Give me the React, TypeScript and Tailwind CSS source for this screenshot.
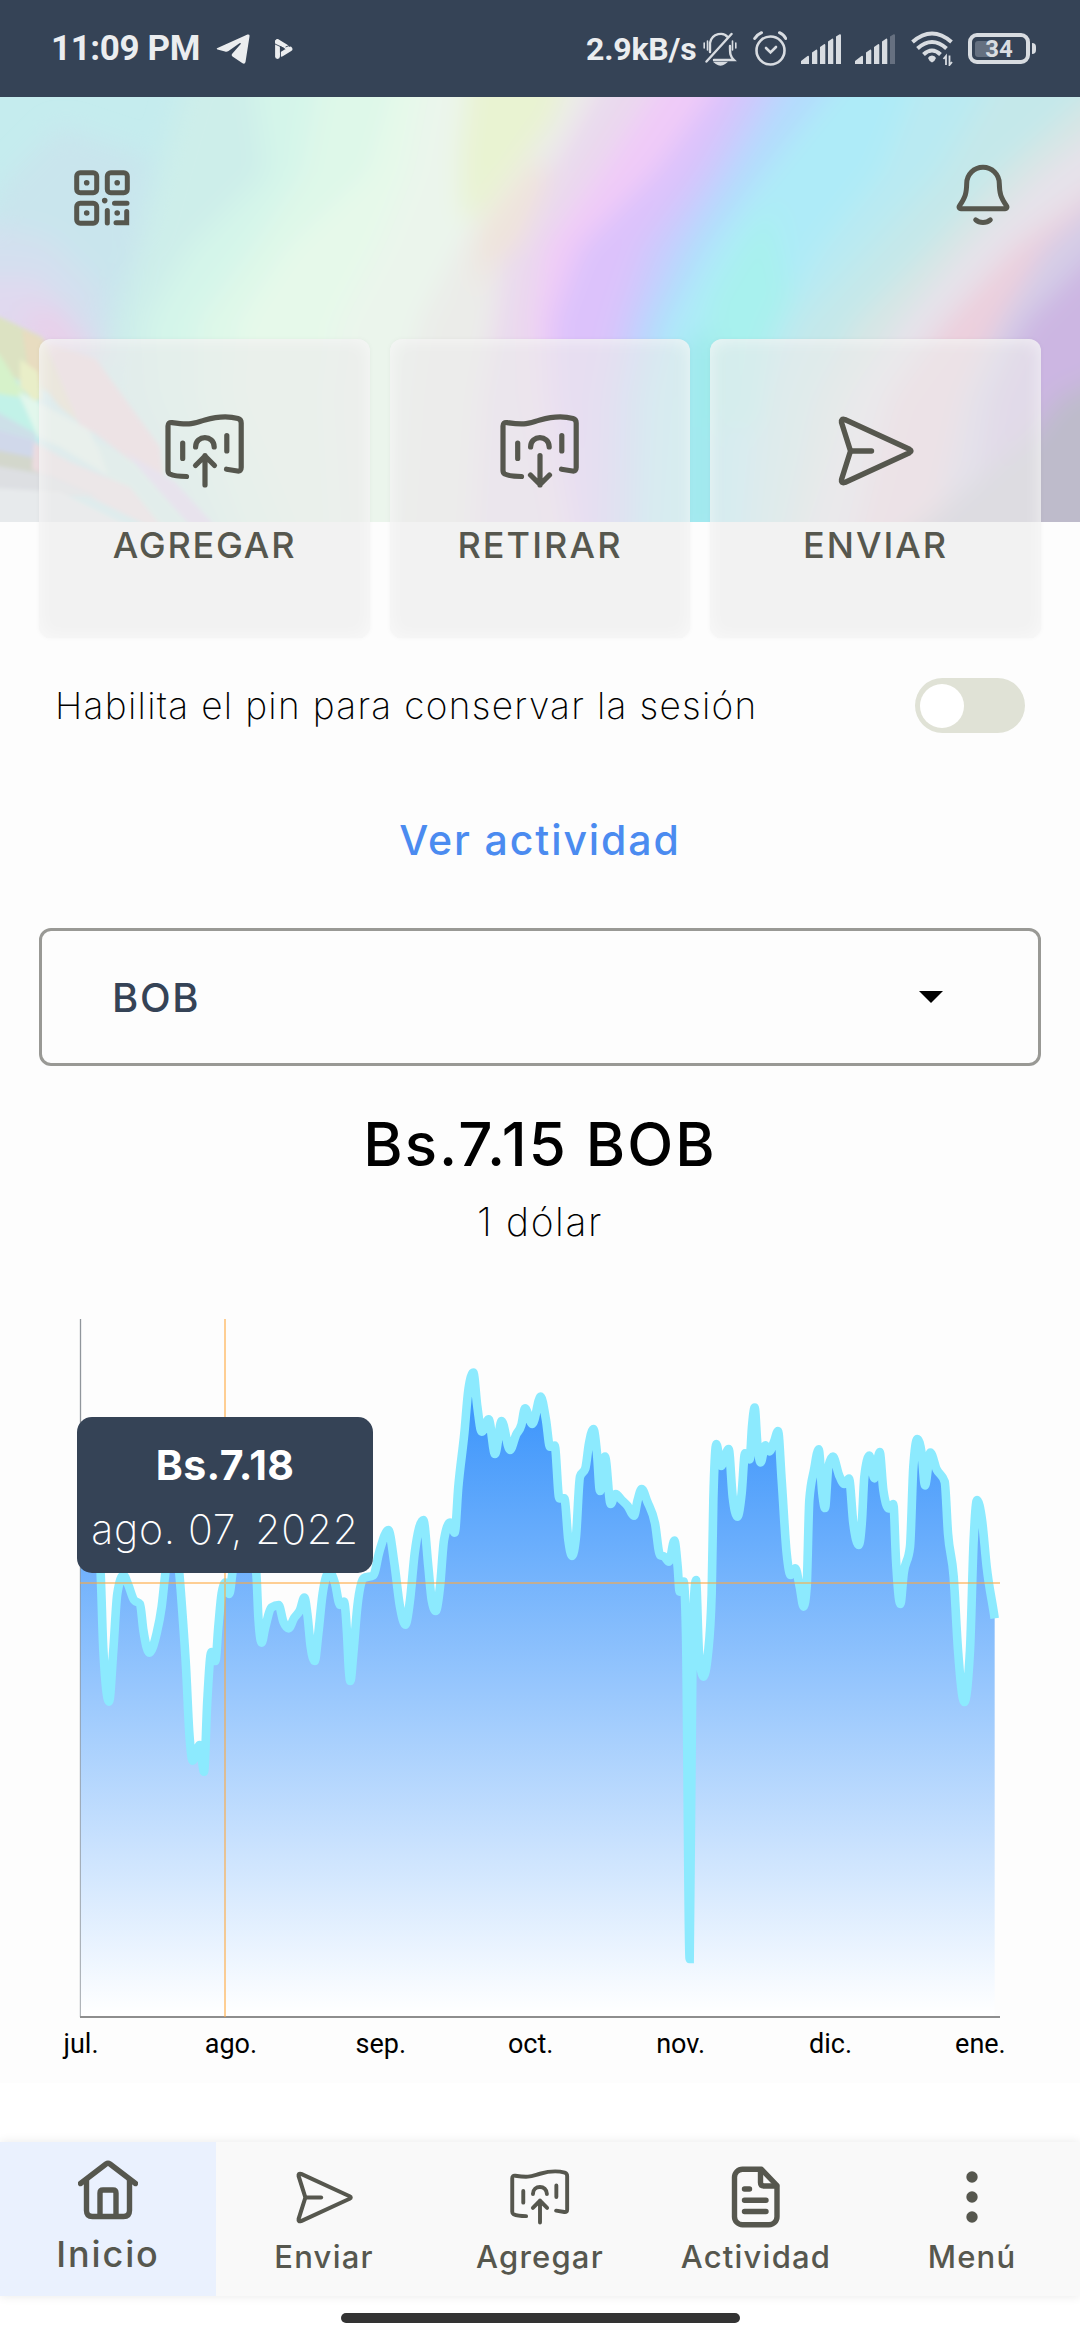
import type { ReactNode } from 'react';

type IconProps = {
  className?: string;
};

// Holographic header: every band covers from its left edge to the right side
const BAND_ROWS = [-30, 75, 150, 225, 300, 460];

const BANDS = [
  { color: '#cdeeea', edge: [190, 160, 140, 115, 110, 180] },
  { color: '#d4f5ea', edge: [250, 265, 190, 145, 150, 230] },
  { color: '#def8e9', edge: [320, 300, 250, 195, 195, 250] },
  { color: '#e6f9ea', edge: [400, 370, 290, 240, 235, 300] },
  { color: '#ebf5ec', edge: [430, 410, 380, 340, 330, 340] },
  { color: '#ebece9', edge: [570, 520, 460, 420, 410, 400] },
  { color: '#ead9ee', edge: [610, 550, 505, 495, 480, 470] },
  { color: '#f0cbf8', edge: [670, 600, 545, 535, 540, 570] },
  { color: '#dcc2fb', edge: [730, 655, 580, 552, 555, 580] },
  { color: '#c9ccfd', edge: [760, 700, 645, 620, 605, 600] },
  { color: '#b4dcfd', edge: [795, 730, 680, 645, 630, 630] },
  { color: '#aeebf8', edge: [850, 765, 710, 670, 650, 640] },
  { color: '#b9eaf2', edge: [920, 880, 820, 775, 750, 740] },
  { color: '#c4e8ea', edge: [1000, 940, 870, 800, 770, 750] },
  { color: '#d6e6e5', edge: [1120, 1000, 930, 855, 815, 780] },
  { color: '#e6e2ea', edge: [1180, 1040, 965, 900, 850, 800] },
  { color: '#eccfdd', edge: [1280, 1120, 1015, 945, 890, 850] },
  { color: '#d4cde7', edge: [1290, 1130, 1045, 1000, 965, 930] },
  { color: '#ccb6e2', edge: [1290, 1200, 1100, 1025, 990, 970] },
];

const PATCHES = [
  { color: '#c9e5ed', points: '0,90 60,30 150,60 140,150 100,260 -40,200' },
  { color: '#d3e0ef', points: '-40,120 50,140 100,190 110,260 -40,230' },
  { color: '#e0d9ef', points: '-40,180 40,180 80,230 110,260 -40,250' },
  { color: '#e8d0ea', points: '25,215 60,210 100,270 50,275 25,240' },
  { color: '#e9f3d2', points: '470,-30 570,-30 555,20 525,60 480,120 462,120 460,60' },
  { color: '#efe4dc', points: '500,100 535,60 550,80 520,150 490,170 478,200 475,140' },
  { color: '#a8f1ee', points: '740,150 770,110 790,200 770,240 760,330 690,330 710,200' },
  { color: '#9ce8ea', points: '688,240 715,240 715,440 688,440' },
  { color: '#bebbcb', points: '1130,270 1060,300 1030,340 880,460 1130,460' },
];

// Small facets of the lower left corner
const SHARDS = [
  { color: '#dce2c2', points: '-20,215 0,220 42,240 70,300 30,290 -20,260' },
  { color: '#d6f2ca', points: '-20,245 0,258 20,290 40,320 20,310 -20,290' },
  { color: '#e8dcc0', points: '22,232 42,242 60,262 85,330 60,310 28,270' },
  { color: '#e9eec8', points: '20,262 38,275 42,302 34,304 20,290' },
  { color: '#eed2d8', points: '45,245 96,262 160,350 165,390 93,335 80,330' },
  { color: '#c2f2e8', points: '-20,290 0,297 20,300 38,335 34,342 -20,310' },
  { color: '#e2f7ec', points: '18,295 36,304 88,332 98,350 110,380 60,350 38,340' },
  { color: '#cde0e8', points: '-20,305 35,336 35,352 -20,330' },
  { color: '#d0d8ea', points: '-20,328 36,344 32,364 -20,352' },
  { color: '#cff0e8', points: '97,345 160,380 210,440 150,440 110,385' },
  { color: '#e0d2f0', points: '125,355 175,385 225,440 200,440 160,395' },
  { color: '#d3d7cc', points: '-20,350 55,365 60,374 32,378 -20,368' },
  { color: '#ecdce0', points: '34,345 70,365 130,390 170,440 90,400 32,372' },
  { color: '#dddfe2', points: '-20,366 50,378 100,400 -20,395' },
  { color: '#e7eaec', points: '-20,390 60,395 150,440 -20,440' },
];

const MONTHS = ['jul.', 'ago.', 'sep.', 'oct.', 'nov.', 'dic.', 'ene.'];

// Exchange rate curve, in thirds of a pixel from the chart's origin
const RATES: [number, number][] = [
  [62, 640], [90, 500], [110, 680], [122, 820], [130, 1050], [147, 1205], [160, 1050], [172, 880],
  [190, 825], [205, 855], [222, 900], [240, 912], [250, 990], [268, 1058], [290, 1000], [305, 920],
  [316, 820], [336, 700], [358, 820], [368, 950], [378, 1100], [388, 1300], [398, 1382], [419, 1335],
  [432, 1415], [442, 1200], [454, 1056], [466, 1083], [475, 980], [485, 880], [496, 848], [508, 882],
  [517, 820], [550, 600], [589, 820], [595, 950], [605, 1028], [615, 985], [635, 922], [656, 915],
  [670, 965], [686, 985], [702, 955], [720, 930], [733, 893], [743, 950], [752, 1040], [764, 1083],
  [775, 1000], [788, 880], [808, 815], [825, 850], [840, 915], [852, 905], [861, 1000], [866, 1100],
  [871, 1143], [880, 1060], [892, 920], [910, 835], [940, 826], [958, 755], [985, 690], [1003, 790],
  [1020, 920], [1036, 974], [1050, 900], [1064, 760], [1090, 660], [1105, 800], [1115, 900], [1127, 933],
  [1140, 860], [1152, 720], [1170, 668], [1184, 698], [1195, 560], [1213, 400], [1225, 270], [1240, 218],
  [1252, 320], [1265, 395], [1286, 358], [1305, 462], [1325, 363], [1350, 450], [1368, 405], [1384, 375],
  [1395, 325], [1417, 372], [1442, 290], [1458, 360], [1470, 440], [1484, 437], [1498, 595], [1513, 595],
  [1525, 720], [1536, 768], [1548, 710], [1560, 530], [1576, 505], [1587, 430], [1600, 387], [1611, 460],
  [1620, 573], [1635, 470], [1652, 612], [1667, 582], [1685, 600], [1703, 618], [1722, 647], [1733, 600],
  [1745, 567], [1762, 605], [1785, 670], [1800, 765], [1813, 770], [1827, 785], [1843, 722], [1853, 800],
  [1859, 875], [1871, 845], [1878, 1000], [1889, 1977], [1898, 1000], [1908, 840], [1917, 1060], [1930, 1130],
  [1944, 1060], [1955, 880], [1960, 600], [1969, 432], [1983, 498], [2006, 447], [2018, 590], [2032, 650],
  [2045, 580], [2055, 460], [2069, 478], [2076, 380], [2084, 323], [2092, 430], [2102, 487], [2116, 436],
  [2128, 454], [2142, 425], [2154, 393], [2165, 540], [2180, 760], [2192, 825], [2206, 805], [2219, 860],
  [2231, 920], [2240, 860], [2248, 600], [2262, 510], [2276, 448], [2287, 580], [2295, 624], [2305, 500],
  [2319, 470], [2337, 525], [2353, 552], [2367, 536], [2380, 670], [2396, 735], [2406, 660], [2413, 530],
  [2428, 467], [2443, 535], [2459, 456], [2470, 570], [2486, 625], [2500, 612], [2508, 780], [2521, 912],
  [2531, 820], [2550, 740], [2560, 500], [2572, 417], [2585, 460], [2595, 556], [2611, 458], [2630, 508],
  [2654, 545], [2664, 700], [2681, 830], [2694, 1050], [2713, 1206], [2730, 1050], [2741, 720], [2751, 600],
  [2766, 660], [2780, 800], [2804, 955],
];

// Monotone cubic interpolation, so that each peak stays a peak
const monotonePath = (points: [number, number][]) => {
  const slopes = points.map((point, i) => {
    if (i === 0 || i === points.length - 1) return 0;
    const [x0, y0] = points[i - 1];
    const [x1, y1] = point;
    const [x2, y2] = points[i + 1];
    const s0 = (y1 - y0) / (x1 - x0);
    const s1 = (y2 - y1) / (x2 - x1);
    if (s0 * s1 <= 0) return 0;
    const p = (s0 * (x2 - x1) + s1 * (x1 - x0)) / (x2 - x0);
    return Math.sign(s0) * Math.min(2 * Math.abs(s0), 2 * Math.abs(s1), Math.abs(p));
  });
  slopes[points.length - 1] = 7;

  return points.reduce((path, [x, y], i) => {
    if (i === 0) return `M${x},${y}`;
    const [px, py] = points[i - 1];
    const dx = (x - px) / 3;
    const c1 = `${px + dx},${py + slopes[i - 1] * dx}`;
    const c2 = `${x - dx},${y - slopes[i] * dx}`;
    return `${path}C${c1} ${c2} ${x},${y}`;
  }, '');
};

const LINE = monotonePath(
  RATES.map(([x, y]): [number, number] => [x / 3, y / 3])
);

const QrIcon = ({ className }: IconProps) => (
  <svg viewBox="0 0 56 56" fill="none" stroke="currentColor" strokeWidth="5" className={className}>
    <rect x="2.7" y="2.7" width="20" height="20" rx="3.5" />
    <rect x="33.3" y="2.7" width="20" height="20" rx="3.5" />
    <rect x="2.7" y="33.3" width="20" height="20" rx="3.5" />
    <g strokeLinecap="round">
      <path d="M33.3 40.5v12.5M40.5 33.3h12.5M42 52.7h10.7V41.5" />
      <path strokeWidth="5.6" d="M12.7 12.7h.01M43.2 12.7h.01M12.7 43h.01M43.2 43h.01M30.7 30.6h.01" />
    </g>
  </svg>
);

const BellIcon = ({ className }: IconProps) => (
  <svg
    viewBox="0 0 54 62"
    fill="none"
    stroke="currentColor"
    strokeWidth="5"
    strokeLinecap="round"
    strokeLinejoin="round"
    className={className}
  >
    <path d="M3.5 44.2Q2.6 43 3.6 41.6C9.5 33 10.5 29 10.7 19.5a16.3 16.3 0 0 1 32.6 0C43.5 29 44.5 33 50.4 41.6Q51.4 43 50.5 44.2q-.4.6-1.3.6H4.8q-.9 0-1.3-.6Z" />
    <path d="M19.7 55.8c4 3.5 10.6 3.5 14.6 0" />
  </svg>
);

const BillIcon = ({ className, children }: IconProps & { children: ReactNode }) => (
  <svg
    viewBox="0 0 80 74"
    fill="none"
    stroke="currentColor"
    strokeWidth="5.2"
    strokeLinecap="round"
    strokeLinejoin="round"
    className={className}
  >
    <path d="M21.5 62.5C16 62.5 9 62 4.8 60Q3 59 3 56.5V12Q3 8 7 8.600C26 11.5 28 9.3 40 6 52 2.5 64 2 73 4.5Q76.2 5.5 76.2 9V53.5Q76.2 57.5 72.5 57L61.5 55.2" />
    <path d="M17.7 29v15.5M61.8 21.5v15.5M30.6 33c0-12.5 18.6-12.5 18.6 0" />
    {children}
  </svg>
);

const AddIcon = ({ className }: IconProps) => (
  <BillIcon className={className}>
    <path d="M40 71V41.5M30.5 51.5 40 42l9.5 9.5" />
  </BillIcon>
);

const WithdrawIcon = ({ className }: IconProps) => (
  <BillIcon className={className}>
    <path d="M40 41.5V71M30.5 61 40 70.5l9.5-9.5" />
  </BillIcon>
);

const SendIcon = ({ className }: IconProps) => (
  <svg
    viewBox="0 0 76 70"
    fill="none"
    stroke="currentColor"
    strokeWidth="5.4"
    strokeLinecap="round"
    strokeLinejoin="round"
    className={className}
  >
    <path d="M6.8 3.5 71.5 33.3q3 1.7 0 3.4L6.8 66.5Q2.8 67.5 3.5 63.5L12.5 35 3.5 6.5Q2.8 2.5 6.8 3.5Z" />
    <path d="M13 35h20.5" />
  </svg>
);

const HomeIcon = ({ className }: IconProps) => (
  <svg
    viewBox="0 0 60 60"
    fill="none"
    stroke="currentColor"
    strokeWidth="5.4"
    strokeLinecap="round"
    strokeLinejoin="round"
    className={className}
  >
    <path d="M2.5 23.5 28 4Q30 2.6 32 4L57.5 23.5" />
    <path d="M8.5 20v30.5q0 6 6 6h31q6 0 6-6V20M22 56V33q0-3 3-3h10q3 0 3 3v23" />
  </svg>
);

const DocumentIcon = ({ className }: IconProps) => (
  <svg
    viewBox="0 0 50 62"
    fill="none"
    stroke="currentColor"
    strokeWidth="5.4"
    strokeLinecap="round"
    strokeLinejoin="round"
    className={className}
  >
    <path d="M30.5 3.3H11.5a8 8 0 0 0-8 8v39.4a8 8 0 0 0 8 8h26.5a8 8 0 0 0 8-8V19.5Z" />
    <path d="M29.5 4v12.5q0 3.5 3.5 3.5H45.5" />
    <path d="M13.5 23h5M13.5 34.2h21.5M13.5 45.5h21.5" />
  </svg>
);

const DotsIcon = ({ className }: IconProps) => (
  <svg viewBox="0 0 12 52" fill="currentColor" className={className}>
    <circle cx="6" cy="6" r="5.7" />
    <circle cx="6" cy="26" r="5.7" />
    <circle cx="6" cy="46" r="5.7" />
  </svg>
);

const SignalIcon = ({ weak = false }: { weak?: boolean }) => (
  <svg viewBox="0 0 40 30" fill="currentColor" className="w-10 h-[30px]">
    <path d="M0 30v-3l6.5-5q1.5-.8 1.5 1v7ZM11 30V18.5l4-2.8q1.3-.4 1.3 1V30ZM19 30V13l4-2.8q1.3-.4 1.3 1V30ZM27 30V7.5l4-2.8q1.3-.4 1.3 1V30Z" />
    <path opacity={weak ? 0.3 : 1} d="M35 30V2.5l3.7-2.3Q40 0 40 1.5V30Z" />
  </svg>
);

const StatusBar = () => (
  <div className="h-[97px] bg-[#354356] flex items-center justify-between pl-[51px] pr-[44px] font-['Roboto',sans-serif] font-bold text-[#ebedef]">
    <div className="flex items-center">
      <span className="text-[35px] leading-none w-[149px] whitespace-nowrap -tracking-[0.4px]">11:09 PM</span>
      <svg viewBox="0 0 34 30" fill="currentColor" className="w-[34px] h-[30px] ml-4">
        <path d="M1.5 14 31.5.5Q34 0 33.5 2.5L29.5 28q-.6 2.5-3 1.3L16.5 22.5q-1.5-1.2-.3-2.7l8.3-9.5q1-1.8-1-1l-11 7.8q-1.6 1-3.5.5L1.5 15.5q-1.5-.8 0-1.5Z" />
      </svg>
      <svg viewBox="0 0 18 20" className="w-[18px] h-5 ml-[25px]">
        <path d="M2.5 3v14.5" stroke="currentColor" strokeWidth="4.8" strokeLinecap="round" />
        <path d="M2.5 2.5 11.5 8M15 10 6.5 15.2" stroke="currentColor" strokeWidth="4.8" strokeLinecap="round" />
        <path d="M0 5 9.5 9.5M5.5 8v11M10.5 8l5-2" stroke="#354356" strokeWidth=".9" fill="none" />
      </svg>
    </div>

    <div className="flex items-center text-[#d8dce1]">
      <span className="text-[32px] leading-none w-[108px] whitespace-nowrap -tracking-[0.2px] text-[#ebedef]">
        2.9kB/s
      </span>
      <svg
        viewBox="0 0 34 34"
        fill="none"
        stroke="currentColor"
        strokeWidth="2.4"
        strokeLinecap="round"
        className="w-[34px] h-[34px] ml-[9px]"
      >
        <path d="M7 20V11C9 .5 21 0 24.5 5M11 28h20c-4-4-4-6-4-14M3.5 29.5 28.5 2" />
        <path d="M1.2 11v5M4.5 9v9M29.5 9v9M32.8 11v5" strokeWidth="1.6" />
        <path d="M13.5 31q4 3 8 0Z" fill="currentColor" />
      </svg>
      <svg
        viewBox="0 0 34 35"
        fill="none"
        stroke="currentColor"
        strokeWidth="2.6"
        strokeLinecap="round"
        className="w-[34px] h-[35px] ml-4"
      >
        <circle cx="17.5" cy="19.5" r="14" />
        <path d="m13 17 4.5 4.5L23 16" />
        <path d="M1.7 7.5Q4 3.7 8.5 1.7M32.7 7.5Q31 3.7 26.5 1.7" strokeWidth="3" />
      </svg>
      <div className="flex gap-[14px] ml-[14px]">
        <SignalIcon />
        <SignalIcon weak />
      </div>
      <svg viewBox="0 0 43 35" fill="none" stroke="currentColor" strokeWidth="4" className="w-[43px] h-[35px] ml-4">
        <path d="M1.5 11Q21 -6 40.5 11M6.5 17.5Q21 4.5 35.5 17.5M12.5 23.5Q21 15.5 29.5 23.5" />
        <path d="M21 24.5q3 0 4 2.5-1 3-4 4.5-3-1.5-4-4.5 1-2.5 4-2.5Z" fill="currentColor" stroke="none" />
        <path d="M35 34V25l-2.5 3M38.5 24.5V34l2.5-3" strokeWidth="1.8" />
      </svg>
      <div className="flex items-center ml-[14px]">
        <div className="relative flex items-center justify-center w-[62px] h-[31px] rounded-[9px] border-4 border-[#d8dce1] text-[24px] leading-none">
          <span className="absolute left-[3px] w-5 h-4 rounded-[3px] bg-[#657080]" />
          <span className="relative">34</span>
        </div>
        <span className="w-1 h-[11px] ml-[2px] rounded-r-[4px] bg-[#d8dce1]" />
      </div>
    </div>
  </div>
);

const ACTIONS = [
  { icon: AddIcon, label: 'AGREGAR', iconClass: 'w-20 h-[74px]', textClass: 'tracking-[1.8px]' },
  { icon: WithdrawIcon, label: 'RETIRAR', iconClass: 'w-20 h-[74px]', textClass: 'tracking-[2.1px]' },
  { icon: SendIcon, label: 'ENVIAR', iconClass: 'w-[76px] h-[70px]', textClass: 'tracking-[2px]' },
];

const Header = () => (
  <header className="relative h-[425px] overflow-hidden flex justify-between items-start pl-[74px] pr-[70px] pt-[67px]">
    <svg viewBox="0 0 1080 425" preserveAspectRatio="none" className="absolute inset-0 w-full h-full">
      <defs>
        <filter id="haze" x="-10%" y="-10%" width="120%" height="120%">
          <feGaussianBlur stdDeviation="13" />
        </filter>
        <filter id="facet" x="-10%" y="-10%" width="120%" height="120%">
          <feGaussianBlur stdDeviation="2" />
        </filter>
      </defs>
      <rect width="1080" height="425" fill="#c5ecee" />
      <g filter="url(#haze)">
        {BANDS.map(({ color, edge }) => (
          <polygon
            key={color}
            fill={color}
            points={`${edge.map((x, i) => `${x},${BAND_ROWS[i]}`).join(' ')} 1300,460 1300,-30`}
          />
        ))}
        {PATCHES.map(({ color, points }) => (
          <polygon key={color} fill={color} points={points} />
        ))}
      </g>
      <g filter="url(#facet)">
        {SHARDS.map(({ color, points }) => (
          <polygon key={color} fill={color} points={points} />
        ))}
      </g>
    </svg>

    <QrIcon className="relative w-14 h-14 mt-[6px]" />
    <BellIcon className="relative w-[54px] h-[62px]" />
  </header>
);

const Actions = () => (
  <div className="relative grid grid-cols-[331px_300px_331px] gap-5 h-[299px] -mt-[183px] mx-[39px]">
    {ACTIONS.map(({ icon: Icon, label, iconClass, textClass }) => (
      <button
        key={label}
        className="flex flex-col items-center pt-[74px] rounded-xl bg-[#ebebeb]/67 shadow-[0_0_5px_rgba(0,0,0,0.04),inset_0_0_18px_rgba(255,255,255,0.6)]"
      >
        <span className="h-[76px] flex items-center justify-center">
          <Icon className={iconClass} />
        </span>
        <span className={`mt-[38px] text-[36px] leading-9 font-medium ${textClass}`}>{label}</span>
      </button>
    ))}
  </div>
);

const Chart = () => (
  <div className="relative mt-[56px] h-[762px]">
    {/* 1px of the view box is 1px of the page; its top is 19px above the axis */}
    <svg viewBox="0 1300 1080 760" className="block w-[1080px] h-[760px]">
      <defs>
        <linearGradient id="area" gradientUnits="userSpaceOnUse" x1="0" y1="72" x2="0" y2="714">
          <stop offset="0" stopColor="#3390fb" />
          <stop offset="1" stopColor="#ffffff" />
        </linearGradient>
      </defs>
      <path d="M80.5 1319V2017" stroke="#90969c" strokeWidth="1.3" />
      <g transform="translate(60 1300)">
        <path d={`${LINE}V717H20.7Z`} fill="url(#area)" />
        <path d={LINE} fill="none" stroke="#8ceafe" strokeWidth="8.6" />
      </g>
      <path d="M80 2017H1000" stroke="#8e8e8e" strokeWidth="2" />
      <path d="M225 1319V2017M80 1583H1000" stroke="#ffa83d" strokeOpacity=".55" strokeWidth="2" />
      <g fontSize="27" textAnchor="middle" className="font-['Roboto',sans-serif]" fill="#000">
        {MONTHS.map((month, i) => (
          <text key={month} x={81 + i * 149.9} y="2053">
            {month}
          </text>
        ))}
      </g>
    </svg>

    <div className="absolute left-[77px] top-[117px] w-[296px] h-[156px] rounded-[15px] bg-[#354356] text-white flex flex-col items-center">
      <span className="mt-[25px] text-[41px] leading-[46px] font-bold tracking-[0.4px]">Bs.7.18</span>
      <span className="mt-[18px] text-[41px] leading-[46px] font-extralight tracking-[0.7px] whitespace-nowrap">
        ago. 07, 2022
      </span>
    </div>
  </div>
);

const TABS = [
  { icon: HomeIcon, label: 'Inicio', iconClass: 'w-[60px] h-[60px]', active: true },
  { icon: SendIcon, label: 'Enviar', iconClass: 'w-[57px] h-[53px]' },
  { icon: AddIcon, label: 'Agregar', iconClass: 'w-[60px] h-[56px]' },
  { icon: DocumentIcon, label: 'Actividad', iconClass: 'w-[50px] h-[62px]' },
  { icon: DotsIcon, label: 'Menú', iconClass: 'w-3 h-[52px]' },
];

const TabBar = () => (
  <nav className="relative h-[154px] grid grid-cols-5 bg-[#f9f9f9] shadow-[0_0_10px_rgba(0,0,0,0.09)]">
    {TABS.map(({ icon: Icon, label, iconClass, active }) => (
      <button
        key={label}
        className={`flex flex-col items-center ${active ? 'bg-[#eaf1fe] pt-[17px]' : 'pt-[24px]'}`}
      >
        <span className="h-[62px] flex items-center justify-center">
          <Icon className={iconClass} />
        </span>
        <span
          className={
            active
              ? 'mt-[13px] text-[36px] leading-10 font-medium tracking-[1.9px]'
              : 'mt-[11px] text-[31px] leading-9 font-medium tracking-[1.2px]'
          }
        >
          {label}
        </span>
      </button>
    ))}
  </nav>
);

const App = () => {
  return (
    <main className="w-[1080px] h-[2340px] overflow-hidden bg-white text-[#56574e] font-['Inter',sans-serif]">
      <StatusBar />

      <div className="h-[1986px] bg-[#fdfdfd]">
        <Header />
        <Actions />

        <div className="flex items-center justify-between mt-[40px] pl-[55px] pr-[55px]">
          <p className="text-[37px] leading-[55px] font-extralight text-black tracking-[1.3px] whitespace-nowrap">
            Habilita el pin para conservar la sesión
          </p>
          <span className="w-[110px] h-[55px] rounded-full bg-[#e0e2d6] flex items-center pl-[5px]">
            <span className="w-[44px] h-[44px] rounded-full bg-white" />
          </span>
        </div>

        <p className="mt-[81px] text-center text-[41px] leading-[52px] font-medium text-[#4b8bf0] tracking-[1.9px]">
          Ver actividad
        </p>

        <div className="mt-[62px] mx-[39px] h-[138px] rounded-xl border-3 border-[#999995] flex items-center justify-between pl-[70px] pr-[94px]">
          <span className="mt-[2px] text-[40px] text-[#354356] font-medium tracking-[1.7px]">BOB</span>
          <svg viewBox="0 0 26 13" className="w-[26px] h-3">
            <path d="M0 0h26L13 13Z" fill="#000" />
          </svg>
        </div>

        <h1 className="mt-[46px] text-center text-[60px] leading-[64px] font-medium text-black tracking-[2px]">
          Bs.7.15 BOB
        </h1>
        <p className="mt-[24px] text-center text-[39px] leading-[44px] font-extralight text-black tracking-[1.6px]">
          1 dólar
        </p>

        <Chart />
      </div>

      <div className="h-[59px]" />
      <TabBar />
      <div className="pt-[17px] flex justify-center">
        <span className="w-[399px] h-[10px] rounded-full bg-[#333333]" />
      </div>
    </main>
  );
};

export default App;
